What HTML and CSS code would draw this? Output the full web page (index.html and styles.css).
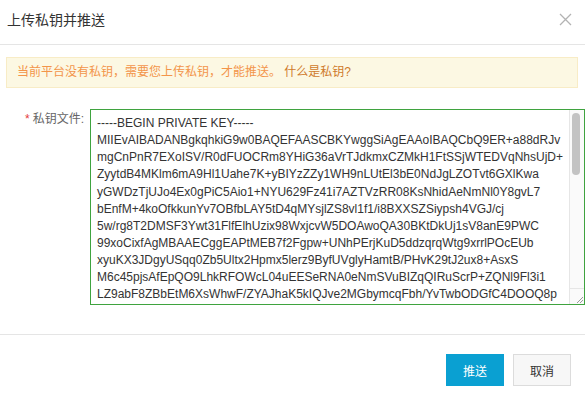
FILE: index.html
```html
<!DOCTYPE html>
<html lang="zh-CN">
<head>
  <meta charset="UTF-8" />
  <title>上传私钥并推送</title>
  <link rel="stylesheet" href="styles.css">
</head>
<body>
  <div class="dialog">
    <!-- header -->
    <div class="dialog-header">
      <span class="dialog-title">上传私钥并推送</span>
      <span class="close">
        <svg width="13" height="13" viewBox="0 0 13 13"><path d="M1 1 L12 12 M12 1 L1 12" stroke="#b3b3b3" stroke-width="1.3" fill="none"/></svg>
      </span>
    </div>

    <div class="dialog-body">
      <div class="alert">当前平台没有私钥，需要您上传私钥，才能推送。 <a href="#" class="alert-link">什么是私钥?</a></div>

      <div class="form-row">
        <label class="form-label"><span class="required">*</span>私钥文件:</label>
        <div class="key-wrap">
          <textarea class="key-input" spellcheck="false">-----BEGIN PRIVATE KEY-----
MIIEvAIBADANBgkqhkiG9w0BAQEFAASCBKYwggSiAgEAAoIBAQCbQ9ER+a88dRJv
mgCnPnR7EXoISV/R0dFUOCRm8YHiG36aVrTJdkmxCZMkH1FtSSjWTEDVqNhsUjD+
ZyytdB4MKlm6mA9Hl1Uahe7K+yBIYzZZy1WH9nLUtEl3bE0NdJgLZOTvt6GXlKwa
yGWDzTjUJo4Ex0gPiC5Aio1+NYU629Fz41i7AZTVzRR08KsNhidAeNmNl0Y8gvL7
bEnfM+4koOfkkunYv7OBfbLAY5tD4qMYsjlZS8vl1f1/i8BXXSZSiypsh4VGJ/cj
5w/rg8T2DMSF3Ywt31FlfElhUzix98WxjcvW5DOAwoQA30BKtDkUj1sV8anE9PWC
99xoCixfAgMBAAECggEAPtMEB7f2Fgpw+UNhPErjKuD5ddzqrqWtg9xrrlPOcEUb
xyuKX3JDgyUSqq0Zb5Ultx2Hpmx5lerz9ByfUVglyHamtB/PHvK29tJ2ux8+AsxS
M6c45pjsAfEpQO9LhkRFOWcL04uEESeRNA0eNmSVuBIZqQIRuScrP+ZQNl9Fl3i1
LZ9abF8ZBbEtM6XsWhwF/ZYAJhaK5kIQJve2MGbymcqFbh/YvTwbODGfC4DOOQ8p
Ku7fH2nQd9bXcLp1RgWm4sTzYe0Av8JiOq3NhUkD6xMrBy5oPaZlFtGw2VcEjI+n
Q0aT7mLwY3kdGhXc9PvNs1fRzBuJ4ieKo8Dp2VbMgAyHlSt6WqCxZnE5jUrFOd0K
v3pYwM8aQhN1cTsLgE7uRk2BfJzXo9iGdV4qHnSe6WtAlCrPmy0KbUjF5OxZ3Iwe
R9kNf2QbA7tLpYs1eVmJcUzG8XhOw4aDnKi0rTgE3WlSqBvM6yFjPdHoZ5uCxIb2
cT4nLmQaE8yVk1ZsPwJf0RgUhO9bXiD3eKt7NjAoGBAM6lWqHzT2rEyf5VnKc8dPs
Xa1oGmBe4RjUt7LvNw9QhS3ZkYc2FdIpKx0Mn6TzHgJrA8qEbWy5CsVlPuO4ei1D
0fNgK7QhUbZ2RmXtLp9aYcJ3eVwDs8GkEoF4iTnM5zyBqH1rWuIxCv6PjlSdA7Ob
pT8WmYe2KcRz0NfLq4HgXa9DvJ5sBtUi1EwMo3nGhlZk7QjCxbF6yPrAdS2VeuIo
Hn4QrPzW7eKcYf1DgB9tMlUaJ0sXvN3iEo5ZkS8Cq2GbyL6dFwTmAhRjOx4VpIue
-----END PRIVATE KEY-----</textarea>
          <!-- scrollbar drawn by hand, the headless browser hides the native one -->
          <div class="scroll-track"><div class="scroll-thumb"></div></div>
          <div class="scroll-corner">
            <svg width="9" height="9" viewBox="0 0 9 9"><path d="M8 2 L2 8 M8 5 L5 8" stroke="#9a9a9a" stroke-width="1" fill="none"/></svg>
          </div>
        </div>
      </div>
    </div>

    <div class="dialog-footer">
      <button class="btn btn-primary">推送</button>
      <button class="btn btn-default">取消</button>
    </div>
  </div>
</body>
</html>
```

FILE: styles.css
```css
body {
  margin: 0;
  background: #fff;
  font-family: "Liberation Sans", "Noto Sans CJK SC", sans-serif;
  color: #333;
}

.dialog {
  width: 585px;
  overflow: hidden;
}

.dialog-header {
  height: 45px;
  box-sizing: border-box;
  padding: 0 13px 6px 7px;
  display: flex;
  align-items: center;
  justify-content: space-between;
  border-bottom: 1px solid #e5e5e5;
}

.dialog-title {
  font-size: 14px;
  color: #333;
}

.close {
  display: flex;
  margin-top: 1px;
}

.dialog-body {
  padding: 12px 7px 0 6px;
}

.alert {
  height: 31px;
  box-sizing: border-box;
  padding: 0 10px;
  line-height: 29px;
  font-size: 12px;
  background: #fcf8e3;
  border: 1px solid #f8ecc6;
  color: #f3954a;
}

.alert-link {
  color: #cf7a2b;
  text-decoration: none;
}

.form-row {
  display: flex;
  margin-top: 21px;
}

.form-label {
  width: 84px;
  box-sizing: border-box;
  padding-right: 6px;
  text-align: right;
  font-size: 12px;
  color: #666;
  flex-shrink: 0;
}

.required {
  color: #e43b3b;
  margin-right: 3px;
}

.key-wrap {
  position: relative;
  width: 495px;
  height: 196px;
  flex-shrink: 0;
}

.key-input {
  display: block;
  width: 100%;
  height: 100%;
  box-sizing: border-box;
  margin: 0;
  padding: 5px 21px 5px 6px;
  border: 1px solid #3fa33f;
  border-radius: 0;
  outline: none;
  overflow: hidden;
  font-family: "Liberation Sans", sans-serif;
  font-size: 12px;
  line-height: 1.428571;
  color: #333;
  resize: none;
}

.scroll-track {
  position: absolute;
  top: 1px;
  right: 1px;
  bottom: 16px;
  width: 14px;
  background: #fafafa;
  border-left: 1px solid #e6e6e6;
}

.scroll-thumb {
  position: absolute;
  top: 3px;
  left: 2px;
  width: 8px;
  height: 62px;
  border-radius: 4px;
  background: #c3c3c3;
}

.scroll-corner {
  position: absolute;
  right: 1px;
  bottom: 1px;
  width: 14px;
  height: 15px;
  background: #fafafa;
  border-left: 1px solid #e6e6e6;
  border-top: 1px solid #e6e6e6;
  display: flex;
  align-items: flex-end;
  justify-content: flex-end;
}

.dialog-footer {
  margin-top: 29px;
  border-top: 1px solid #e5e5e5;
  padding: 19px 14px 0 0;
  display: flex;
  justify-content: flex-end;
  gap: 9px;
}

.btn {
  width: 58px;
  height: 32px;
  font-family: "Noto Sans CJK SC", sans-serif;
  font-size: 12px;
  border-radius: 0;
  cursor: pointer;
  padding: 0;
}

.btn-primary {
  background: #0aa0d2;
  border: 1px solid #0aa0d2;
  color: #fff;
}

.btn-default {
  background: #f7f7f7;
  border: 1px solid #dcdcdc;
  color: #333;
}
```
